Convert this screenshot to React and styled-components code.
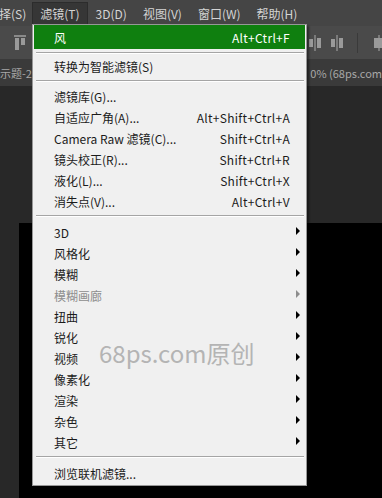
import React from 'react';
import styled, { createGlobalStyle } from 'styled-components';

const GlobalStyle = createGlobalStyle`
  html, body {
    margin: 0;
    padding: 0;
    background: #282828;
  }
  body {
    font-family: 'Noto Sans CJK SC', 'Noto Sans', sans-serif;
  }
`;

const Screen = styled.div`
  position: relative;
  width: 382px;
  height: 498px;
  overflow: hidden;
  display: flex;
  flex-direction: column;
  background: #282828;
`;

const MenuBar = styled.div`
  height: 26px;
  display: flex;
  align-items: center;
  background: #454545;
`;

const MenuBarItem = styled.div`
  height: 21px;
  display: flex;
  align-items: center;
  padding: ${(p) => (p.$first ? '0 5px 0 0' : '0 7px')};
  margin-left: ${(p) => (p.$first ? '-2px' : '0')};
  font-size: 12px;
  color: #d4d4d4;
  background: ${(p) => (p.$active ? '#363636' : 'transparent')};
  border: 1px solid ${(p) => (p.$active ? '#2c2c2c' : 'transparent')};
  white-space: nowrap;
`;

const Toolbar = styled.div`
  height: 33px;
  display: flex;
  align-items: center;
  background: #4a4a4a;
  padding-left: 14px;
  gap: 10px;
`;

const ToolGroup = styled.div`
  margin-left: auto;
  display: flex;
  align-items: center;
  gap: 10px;
  margin-right: -4px;
`;

const ToolSep = styled.div`
  width: 1px;
  height: 20px;
  background: #3a3a3a;
  margin: 0 4px;
`;

const TabRow = styled.div`
  height: 27px;
  display: flex;
  align-items: center;
  justify-content: space-between;
  background: #3a3a3a;
  font-size: 11px;
  color: #a8a8a8;
  white-space: nowrap;
  overflow: hidden;
`;

const Workspace = styled.div`
  flex: 1;
  display: flex;
  flex-direction: column;
  background: #282828;
`;

const Canvas = styled.div`
  margin-top: 137px;
  margin-left: 19px;
  flex: 1;
  background: #000;
`;

const Dropdown = styled.div`
  position: absolute;
  left: 32px;
  top: 24px;
  width: 271px;
  padding: 0 1px 1px 1px;
  background: #f0f0f0;
  border: 1px solid #979797;
  box-shadow: 2px 2px 2px rgba(0, 0, 0, 0.45);
  z-index: 2;
`;

const Item = styled.div`
  position: relative;
  height: ${(p) => (p.$tall ? '24px' : '21px')};
  display: flex;
  align-items: center;
  justify-content: space-between;
  padding: 0 15px 0 20px;
  font-size: 12px;
  color: ${(p) => (p.$active ? '#ffffff' : p.$disabled ? '#8d8d8d' : '#1b1b1b')};
  background: ${(p) => (p.$active ? '#0f7f0f' : 'transparent')};
  white-space: nowrap;
`;

const Shortcut = styled.span`
  letter-spacing: 0.3px;
`;

const Arrow = styled.span`
  position: absolute;
  right: 5px;
  top: 50%;
  margin-top: -6px;
  width: 0;
  height: 0;
  border-top: 4px solid transparent;
  border-bottom: 4px solid transparent;
  border-left: 4px solid ${(p) => (p.$disabled ? '#8d8d8d' : '#000')};
`;

const Separator = styled.div`
  height: ${(p) => p.$h}px;
  box-sizing: border-box;
  padding: 3px 1px 0 2px;
  &::before {
    content: '';
    display: block;
    height: 1px;
    background: #a5a5a5;
    box-shadow: 0 1px 0 #ffffff;
  }
`;

const Watermark = styled.div`
  position: absolute;
  left: 99px;
  top: 341px;
  font-size: 24px;
  line-height: 1;
  color: #b4b4b4;
  font-family: 'Noto Sans CJK SC', 'Noto Sans', sans-serif;
  z-index: 3;
  pointer-events: none;
`;

const AlignIcon = ({ variant }) => {
  if (variant === 'top') {
    return (
      <svg width="12" height="16" viewBox="0 0 12 16">
        <rect x="0" y="0" width="12" height="2" fill="#8a8a8a" />
        <rect x="1" y="3" width="4" height="12" fill="#9a9a9a" />
        <rect x="7" y="3" width="4" height="7" fill="#9a9a9a" />
      </svg>
    );
  }
  if (variant === 'hcenter') {
    return (
      <svg width="12" height="16" viewBox="0 0 12 16">
        <rect x="5" y="0" width="2" height="16" fill="#7a7a7a" />
        <rect x="0" y="4" width="4" height="8" fill="#9a9a9a" />
        <rect x="8" y="3" width="4" height="10" fill="#9a9a9a" />
      </svg>
    );
  }
  return (
    <svg width="14" height="16" viewBox="0 0 14 16">
      <rect x="6" y="0" width="2" height="16" fill="#7a7a7a" />
      <rect x="2" y="3" width="10" height="10" fill="#9a9a9a" />
    </svg>
  );
};

// separator height that comes before each group
const groups = [
  { sep: 0, items: [{ label: '风', shortcut: 'Alt+Ctrl+F', active: true, tall: true }] },
  { sep: 7, items: [{ label: '转换为智能滤镜(S)' }] },
  {
    sep: 9,
    items: [
      { label: '滤镜库(G)...' },
      { label: '自适应广角(A)...', shortcut: 'Alt+Shift+Ctrl+A' },
      { label: 'Camera Raw 滤镜(C)...', shortcut: 'Shift+Ctrl+A' },
      { label: '镜头校正(R)...', shortcut: 'Shift+Ctrl+R' },
      { label: '液化(L)...', shortcut: 'Shift+Ctrl+X' },
      { label: '消失点(V)...', shortcut: 'Alt+Ctrl+V' },
    ],
  },
  {
    sep: 10,
    items: [
      { label: '3D', sub: true },
      { label: '风格化', sub: true },
      { label: '模糊', sub: true },
      { label: '模糊画廊', sub: true, disabled: true },
      { label: '扭曲', sub: true },
      { label: '锐化', sub: true },
      { label: '视频', sub: true },
      { label: '像素化', sub: true },
      { label: '渲染', sub: true },
      { label: '杂色', sub: true },
      { label: '其它', sub: true },
    ],
  },
  { sep: 10, items: [{ label: '浏览联机滤镜...' }] },
];

const menus = ['择(S)', '滤镜(T)', '3D(D)', '视图(V)', '窗口(W)', '帮助(H)'];

export default function App() {
  return (
    <>
      <GlobalStyle />
      <Screen>
        <MenuBar>
          {menus.map((m, i) => (
            <MenuBarItem key={m} $first={i === 0} $active={i === 1}>
              {m}
            </MenuBarItem>
          ))}
        </MenuBar>
        <Toolbar>
          <AlignIcon variant="top" />
          <ToolGroup>
            <AlignIcon variant="hcenter" />
            <AlignIcon variant="hcenter" />
            <ToolSep />
            <AlignIcon variant="box" />
          </ToolGroup>
        </Toolbar>
        <TabRow>
          <span>示题-2</span>
          <span>0% (68ps.com</span>
        </TabRow>
        <Workspace>
          <Canvas />
        </Workspace>

        <Dropdown>
          {groups.map((group, gi) => (
            <React.Fragment key={gi}>
              {group.sep > 0 && <Separator $h={group.sep} />}
              {group.items.map((it) => (
                <Item
                  key={it.label}
                  $active={it.active}
                  $disabled={it.disabled}
                  $tall={it.tall}
                >
                  <span>{it.label}</span>
                  {it.shortcut && <Shortcut>{it.shortcut}</Shortcut>}
                  {it.sub && <Arrow $disabled={it.disabled} />}
                </Item>
              ))}
            </React.Fragment>
          ))}
        </Dropdown>
        <Watermark>68ps.com原创</Watermark>
      </Screen>
    </>
  );
}
